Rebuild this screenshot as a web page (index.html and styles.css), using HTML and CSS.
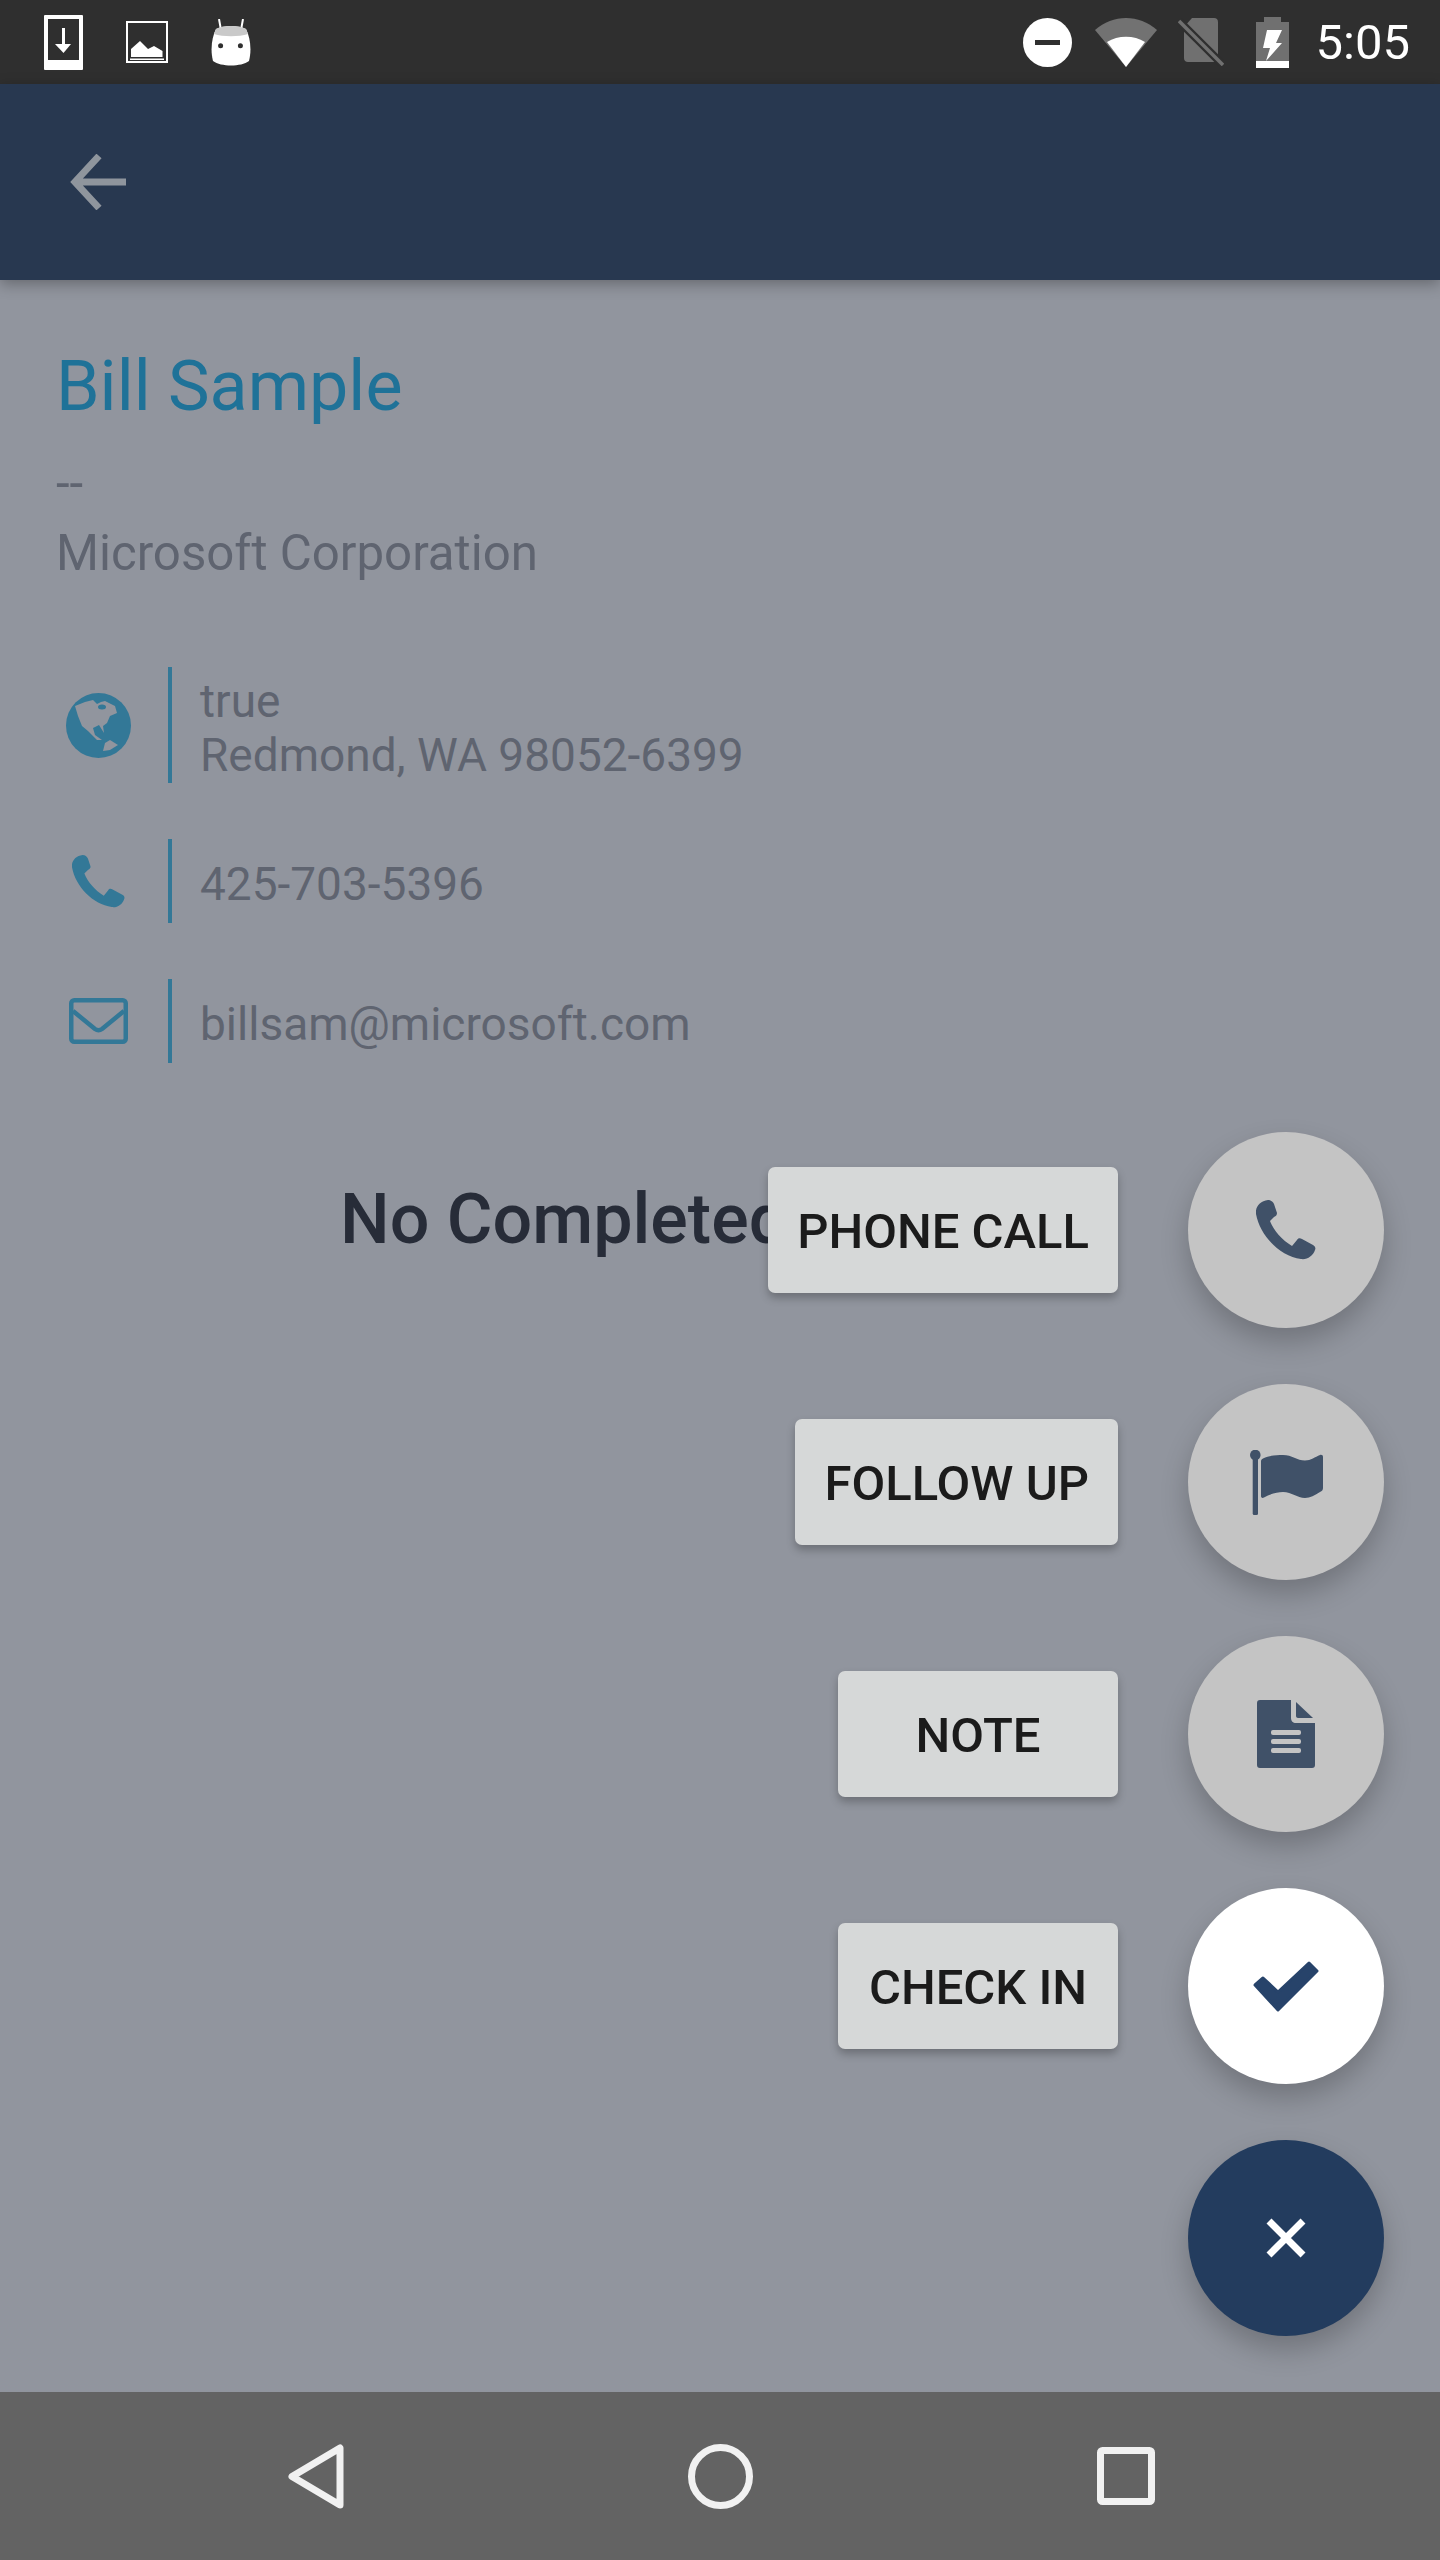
FILE: index.html
```html
<!DOCTYPE html>
<html lang="en">
<head>
    <meta charset="UTF-8">
    <meta name="viewport" content="width=device-width, initial-scale=1.0">
    <title>Bill Sample</title>
    <link rel="stylesheet" href="styles.css">
</head>
<body>
    <div class="page">
        <div class="status-bar">
            <div class="status-left">
                <svg class="icon-download" viewBox="0 0 39 55">
                    <rect width="39" height="55" rx="1" fill="#fff"/>
                    <rect x="4" y="4" width="31" height="41" fill="#2f2f2f"/>
                    <rect x="18" y="13" width="3" height="18" fill="#fff"/>
                    <path d="M11 29H27L19.500 38Z" fill="#fff"/>
                </svg>
                <svg class="icon-picture" viewBox="0 0 42 42">
                    <rect x="1" y="1" width="40" height="40" fill="none" stroke="#fff" stroke-width="2"/>
                    <path d="M5 36V28L14 20L22 28L28 25L36.500 30V36Z" fill="#fff"/>
                    <rect x="4" y="37.500" width="34" height="1.500" fill="#fff"/>
                </svg>
                <svg class="icon-android" viewBox="0 0 40 47">
                    <path d="M8 0L10 11M32 0L30 11" stroke="#fff" stroke-width="2"/>
                    <path d="M5 10C12 6 28 6 35 10C39 18 41 30 38 42C30 48 10 48 2 42C-1 30 1 18 5 10Z" fill="#fff"/>
                    <path d="M5 10C12 6 28 6 35 10L37 15C28 18 12 18 3 15Z" fill="#c9c9c9"/>
                    <circle cx="9.600" cy="26.700" r="2.500" fill="#2f2f2f"/>
                    <circle cx="29.400" cy="26.700" r="2.500" fill="#2f2f2f"/>
                </svg>
            </div>
            <div class="status-right">
                <svg class="icon-dnd" viewBox="0 0 49 49">
                    <circle cx="24.500" cy="24.500" r="24.500" fill="#fff"/>
                    <rect x="12" y="22" width="25" height="5" fill="#2f2f2f"/>
                </svg>
                <svg class="icon-wifi" viewBox="0 0 62 49">
                    <path d="M0 12C18 -4 44 -4 62 12L31 49Z" fill="#727272"/>
                    <path d="M12 24C23 17 39 17 50 24L31 49Z" fill="#fff"/>
                </svg>
                <svg class="icon-sim" viewBox="0 0 46 48">
                    <path d="M14 0H36C38.500 0 40 1.500 40 4V40C40 42.500 38.500 44 36 44H10C7.500 44 6 42.500 6 40V9Z" fill="#707070"/>
                    <path d="M-1 1L44 46" stroke="#2f2f2f" stroke-width="8"/>
                    <path d="M1 3L45 47" stroke="#707070" stroke-width="3.500"/>
                </svg>
                <svg class="icon-battery" viewBox="0 0 33 51">
                    <path d="M8 0H25V5H33V45H0V5H8Z" fill="#707070"/>
                    <rect y="44" width="33" height="7" fill="#fff"/>
                    <path d="M11 13H26L20 26H26L10 44L14 31H7Z" fill="#fff"/>
                </svg>
                <span class="clock">5:05</span>
            </div>
        </div>

        <div class="toolbar">
            <svg class="icon-back" viewBox="0 0 56 56">
                <path d="M29 2L5 28L29 54M5 28H56" fill="none" stroke="#8f959d" stroke-width="7"/>
            </svg>
        </div>

        <div class="content">
            <h1 class="name">Bill Sample</h1>
            <div class="subline">--</div>
            <div class="subline">Microsoft Corporation</div>

            <div class="contact-list">
                <div class="contact-row contact-address">
                    <div class="contact-icon">
                        <svg class="icon-globe" viewBox="0 0 65 65">
                            <circle cx="32.500" cy="32.500" r="32.500" fill="#337897"/>
                            <path d="M9 13L19 9L27 7L31 11L35 9L39 8L49 13L51 20L44 23L41 30L37 33L38 40L33 32L27 35L29 42L36 47L31 47L22 38L16 33L12 23Z" fill="#91959e"/>
                            <ellipse cx="36" cy="14" rx="4" ry="2.500" fill="#337897"/>
                            <path d="M37 58L39 50L44 47L52 52L44 57Z" fill="#91959e"/>
                        </svg>
                    </div>
                    <div class="contact-text">true<br>Redmond, WA 98052-6399</div>
                </div>
                <div class="contact-row">
                    <div class="contact-icon">
                        <svg class="icon-phone-small" viewBox="0 0 60 60">
                            <path class="phone-shape" d="M12 0C15 0 17 2 18 4L21 13C21 15 20 16 18 17L14 21C18 31 26 40 36 46L41 40C42 38 44 38 46 39L57 45C59 46 60 48 59 50C57 56 51 60 45 59C24 56 4 36 0 14C-1 7 4 1 12 0Z" fill="#337897"/>
                        </svg>
                    </div>
                    <div class="contact-text">425-703-5396</div>
                </div>
                <div class="contact-row">
                    <div class="contact-icon">
                        <svg class="icon-mail" viewBox="0 0 59 46">
                            <rect x="2.250" y="2.250" width="54.500" height="41.500" rx="3" fill="none" stroke="#337897" stroke-width="4.500"/>
                            <path d="M4 13L26 31C28 32.500 31 32.500 33 31L55 13" fill="none" stroke="#337897" stroke-width="4.500"/>
                        </svg>
                    </div>
                    <div class="contact-text">billsam@microsoft.com</div>
                </div>
            </div>

            <div class="empty-title">No Completed</div>
        </div>

        <div class="nav-bar">
            <svg class="nav-back" viewBox="0 0 56 65">
                <path d="M52 4V61L4 32.500Z" fill="none" stroke="#f1f1f1" stroke-width="7" stroke-linejoin="round"/>
            </svg>
            <svg class="nav-home" viewBox="0 0 65 65">
                <circle cx="32.500" cy="32.500" r="29" fill="none" stroke="#f1f1f1" stroke-width="7"/>
            </svg>
            <svg class="nav-recent" viewBox="0 0 58 58">
                <rect x="3.500" y="3.500" width="51" height="51" rx="2" fill="none" stroke="#f1f1f1" stroke-width="7"/>
            </svg>
        </div>

        <!-- open action menu, sits over the page -->
        <div class="fab-menu">
            <div class="fab-row">
                <div class="fab-label">PHONE CALL</div>
                <div class="fab">
                    <svg class="icon-phone" viewBox="0 0 60 60">
                        <path d="M12 0C15 0 17 2 18 4L21 13C21 15 20 16 18 17L14 21C18 31 26 40 36 46L41 40C42 38 44 38 46 39L57 45C59 46 60 48 59 50C57 56 51 60 45 59C24 56 4 36 0 14C-1 7 4 1 12 0Z" fill="#405168"/>
                    </svg>
                </div>
            </div>
            <div class="fab-row">
                <div class="fab-label">FOLLOW UP</div>
                <div class="fab">
                    <svg class="icon-flag" viewBox="0 0 73 65">
                        <circle cx="5.300" cy="5" r="5.300" fill="#405168"/>
                        <rect x="2.700" y="5" width="5.300" height="60" rx="1.500" fill="#405168"/>
                        <path d="M11 11C11 10 12 9 13 8.500C20 5 27 5 33 5C42 5 47 10.500 55 10.500C61 10.500 65 7 70 5C72 4.500 73 5.500 73 7V38C73 40 72 41 70 42C65 45 60 48 55 48C47 48 42 42 33 42C27 42 20 44 14 47.500C12 48.500 11 47.500 11 46Z" fill="#405168"/>
                    </svg>
                </div>
            </div>
            <div class="fab-row">
                <div class="fab-label">NOTE</div>
                <div class="fab">
                    <svg class="icon-note" viewBox="0 0 58 68">
                        <path d="M3 0H34V18C34 21 36 23 39 23H58V65C58 67 57 68 55 68H3C1 68 0 67 0 65V3C0 1 1 0 3 0Z" fill="#405168"/>
                        <path d="M39 2L56 18H41C40 18 39 17 39 16Z" fill="#405168"/>
                        <rect x="14" y="30" width="30" height="5" rx="2" fill="#c4c4c4"/>
                        <rect x="14" y="39" width="30" height="5" rx="2" fill="#c4c4c4"/>
                        <rect x="14" y="48" width="30" height="5" rx="2" fill="#c4c4c4"/>
                    </svg>
                </div>
            </div>
            <div class="fab-row">
                <div class="fab-label">CHECK IN</div>
                <div class="fab fab-white">
                    <svg class="icon-check" viewBox="0 0 66 51">
                        <path d="M2 24L10 17L25 31L56 2L64 10L25 49Z" fill="#27436a" stroke="#27436a" stroke-width="3" stroke-linejoin="round"/>
                    </svg>
                </div>
            </div>
            <div class="fab-row">
                <div class="fab fab-dark">
                    <svg class="icon-close" viewBox="0 0 40 40">
                        <path d="M3 3L37 37M37 3L3 37" stroke="#fff" stroke-width="7"/>
                    </svg>
                </div>
            </div>
        </div>
    </div>
</body>
</html>
```

FILE: styles.css
```css
body {
    margin: 0;
    background-color: #91959e;
    font-family: 'Roboto', 'Noto Sans', sans-serif;
}

svg {
    display: block;
    flex-shrink: 0;
}

.page {
    position: relative;
    width: 1440px;
    height: 2560px;
    display: flex;
    flex-direction: column;
    overflow: hidden;
}

/* status bar */
.status-bar {
    height: 84px;
    background-color: #2f2f2f;
    display: flex;
    justify-content: space-between;
    align-items: center;
    padding: 0 30px 0 44px;
}

.status-left,
.status-right {
    display: flex;
    align-items: center;
}

.icon-download {
    width: 39px;
    height: 55px;
    margin-right: 43px;
}

.icon-picture {
    width: 42px;
    height: 42px;
    margin-right: 43px;
}

.icon-android {
    width: 40px;
    height: 47px;
}

.icon-dnd {
    width: 49px;
    height: 49px;
    margin-right: 23px;
}

.icon-wifi {
    width: 62px;
    height: 49px;
    margin-right: 21px;
}

.icon-sim {
    width: 46px;
    height: 48px;
    margin-right: 32px;
}

.icon-battery {
    width: 33px;
    height: 51px;
    margin-right: 27px;
}

.clock {
    font-size: 49px;
    color: #fff;
}

/* toolbar */
.toolbar {
    position: relative;
    height: 196px;
    background-color: #283850;
    display: flex;
    align-items: center;
    padding-left: 70px;
    box-shadow: 0 4px 14px rgba(0, 0, 0, 0.3);
}

.icon-back {
    width: 56px;
    height: 56px;
}

/* contact details */
.content {
    flex: 1;
    padding: 64px 56px 0;
}

.name {
    margin: 0 0 19px;
    font-size: 70px;
    font-weight: 400;
    line-height: 84px;
    color: #1f7298;
}

.subline {
    font-size: 49.2px;
    line-height: 72px;
    color: #5f6470;
}

.subline + .subline {
    margin-top: -2px;
}

.contact-list {
    margin-top: 78px;
    display: flex;
    flex-direction: column;
    gap: 56px;
}

.contact-row {
    display: flex;
    height: 84px;
}

.contact-address {
    height: 116px;
}

.contact-icon {
    width: 84px;
    margin-right: 28px;
    display: flex;
    justify-content: center;
    align-items: center;
}

.contact-text {
    display: flex;
    align-items: center;
    box-sizing: border-box;
    border-left: 4px solid #337897;
    padding: 6px 0 0 28px;
    font-size: 46px;
    line-height: 54px;
    color: #5f6470;
}

.contact-address .contact-text {
    display: block;
    padding-top: 7px;
}

.icon-globe {
    width: 65px;
    height: 65px;
}

.icon-phone-small {
    width: 53px;
    height: 53px;
}

.icon-mail {
    width: 59px;
    height: 46px;
}

.empty-title {
    margin: 114px 0 0 284px;
    font-size: 70px;
    font-weight: 500;
    line-height: 84px;
    color: #272c38;
}

/* nav bar */
.nav-bar {
    height: 168px;
    background-color: #636363;
    display: flex;
    align-items: center;
    gap: 344px;
    padding-left: 288px;
}

.nav-back {
    width: 56px;
    height: 65px;
}

.nav-home {
    width: 65px;
    height: 65px;
}

.nav-recent {
    width: 58px;
    height: 58px;
}

/* fab menu */
.fab-menu {
    position: absolute;
    top: 1132px;
    right: 56px;
    display: flex;
    flex-direction: column;
    gap: 56px;
}

.fab-row {
    display: flex;
    justify-content: flex-end;
    align-items: center;
    gap: 70px;
}

.fab-label {
    min-width: 280px;
    height: 126px;
    box-sizing: border-box;
    padding: 2px 29px 0;
    display: flex;
    justify-content: center;
    align-items: center;
    background-color: #d6d8d8;
    border-radius: 7px;
    box-shadow: 0 5px 9px rgba(0, 0, 0, 0.25);
    font-size: 49px;
    font-weight: 500;
    color: #1b1b1b;
}

.fab {
    width: 196px;
    height: 196px;
    border-radius: 50%;
    background-color: #c4c4c4;
    display: flex;
    justify-content: center;
    align-items: center;
    box-shadow: 0 14px 28px rgba(0, 0, 0, 0.22);
}

.fab-white {
    background-color: #fff;
}

.fab-dark {
    background-color: #233c5e;
}

.icon-phone {
    width: 60px;
    height: 60px;
}

.icon-flag {
    width: 73px;
    height: 65px;
}

.icon-note {
    width: 58px;
    height: 68px;
}

.icon-check {
    width: 66px;
    height: 51px;
}

.icon-close {
    width: 40px;
    height: 40px;
}
```
